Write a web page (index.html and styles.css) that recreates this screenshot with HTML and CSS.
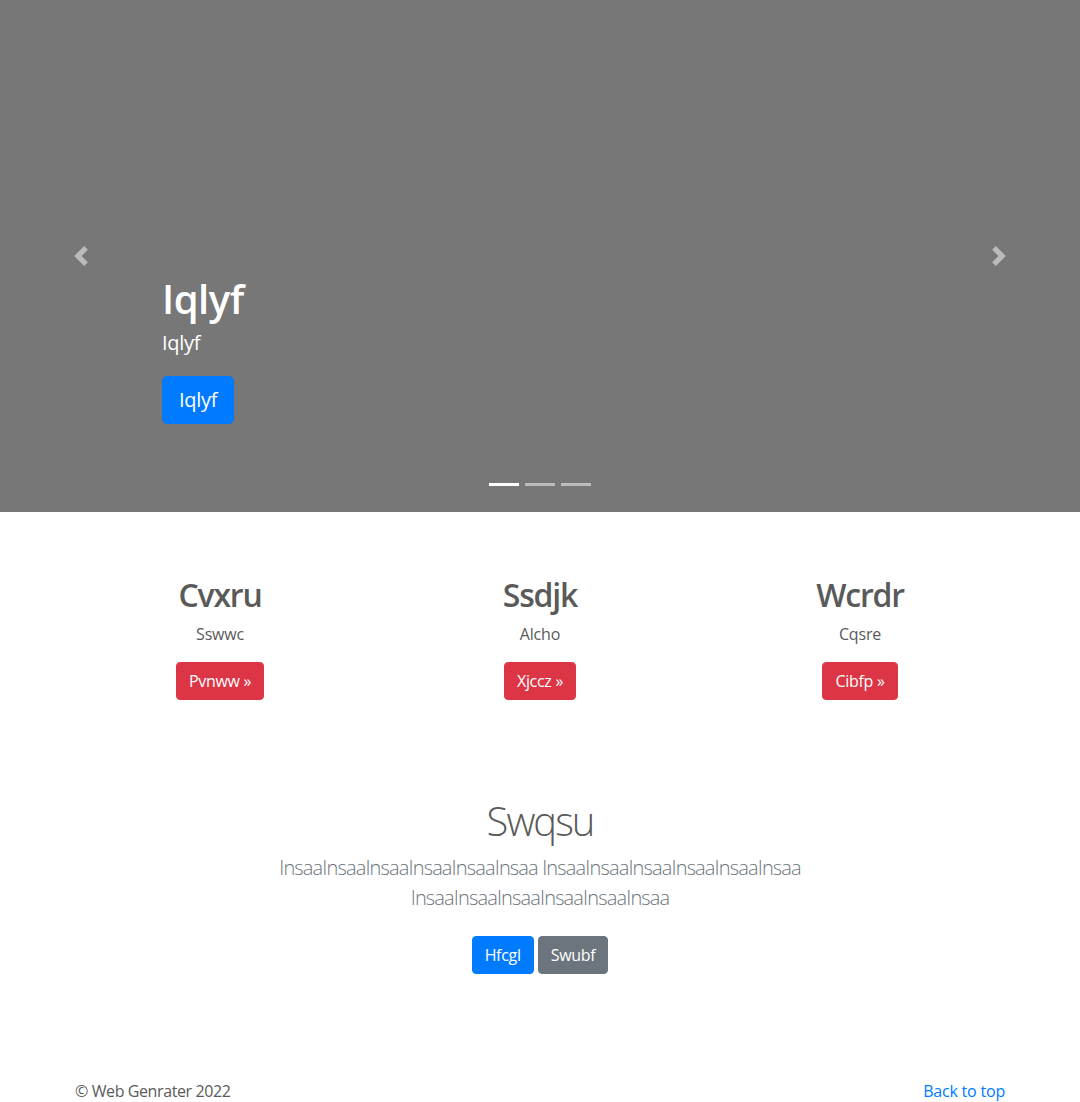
FILE: index.html
```html
<!DOCTYPE html>
<html lang="en">
<head>
<meta charset="utf-8">
<title>Carousel</title>
<link rel="stylesheet" href="styles.css">
</head>
<body>
<div class="carousel">
  <a class="ctrl ctrl-prev" href="#"><svg class="ctrl-icon" viewBox="0 0 8 8"><path d="M5.25 0l-4 4 4 4 1.5-1.5-2.5-2.5 2.5-2.5-1.5-1.5z"/></svg></a>
  <div class="caption">
    <h1 class="caption-title">Iqlyf</h1>
    <p class="caption-text">Iqlyf</p>
    <p class="caption-action"><a class="btn btn-lg btn-primary" href="#">Iqlyf</a></p>
  </div>
  <a class="ctrl ctrl-next" href="#"><svg class="ctrl-icon" viewBox="0 0 8 8"><path d="M2.75 0l-1.5 1.5 2.5 2.5-2.5 2.5 1.5 1.5 4-4-4-4z"/></svg></a>
  <ol class="indicators">
    <li class="active"></li>
    <li></li>
    <li></li>
  </ol>
</div>

<div class="container marketing">
  <div class="row">
    <div class="col">
      <h2 class="col-title">Cvxru</h2>
      <p class="col-text">Sswwc</p>
      <p class="col-action"><a class="btn btn-danger" href="#">Pvnww &raquo;</a></p>
    </div>
    <div class="col">
      <h2 class="col-title">Ssdjk</h2>
      <p class="col-text">Alcho</p>
      <p class="col-action"><a class="btn btn-danger" href="#">Xjccz &raquo;</a></p>
    </div>
    <div class="col">
      <h2 class="col-title">Wcrdr</h2>
      <p class="col-text">Cqsre</p>
      <p class="col-action"><a class="btn btn-danger" href="#">Cibfp &raquo;</a></p>
    </div>
  </div>
</div>

<section class="jumbo">
  <div class="jumbo-inner">
    <h1 class="jumbo-title">Swqsu</h1>
    <p class="lead">InsaaInsaaInsaaInsaaInsaaInsaa InsaaInsaaInsaaInsaaInsaaInsaa InsaaInsaaInsaaInsaaInsaaInsaa</p>
    <p class="jumbo-actions"><a class="btn btn-primary" href="#">Hfcgl</a><a class="btn btn-secondary" href="#">Swubf</a></p>
  </div>
</section>

<footer class="container footer">
  <p class="footer-copy">&copy; Web Genrater 2022</p>
  <p class="footer-top"><a href="#">Back to top</a></p>
</footer>
</body>
</html>
```

FILE: styles.css
```css
* { box-sizing: border-box; }
html, body { margin: 0; padding: 0; }
body {
  font-family: "Open Sans", "Noto Sans", "Liberation Sans", sans-serif;
  font-size: 16px;
  line-height: 1.5;
  color: #5a5a5a;
  background: #fff;
}
p { margin: 0; }
h1, h2 { margin: 0; line-height: 1.2; }
a { text-decoration: none; }

.carousel {
  position: relative;
  height: 512px;
  background: #777;
  margin-bottom: 64px;
}
.ctrl {
  position: absolute;
  top: 0;
  bottom: 0;
  width: 15%;
  display: flex;
  align-items: center;
  justify-content: center;
  opacity: .5;
}
.ctrl-prev { left: 0; }
.ctrl-next { right: 0; }
.ctrl-icon { width: 20px; height: 20px; fill: #fff; }

.caption {
  position: absolute;
  left: 15%;
  right: 15%;
  bottom: 52px;
  padding: 20px 0;
  color: #fff;
  text-align: left;
}
.caption-title {
  font-size: 40px;
  font-weight: 600;
  margin-bottom: 5px;
  letter-spacing: -0.5px;
}
.caption-text { font-size: 20px; margin-bottom: 18px; letter-spacing: -0.3px; }
.caption-action { margin-bottom: 16px; }

.indicators {
  position: absolute;
  left: 15%;
  right: 15%;
  bottom: 26px;
  margin: 0;
  padding: 0;
  list-style: none;
  display: flex;
  justify-content: center;
  gap: 6px;
}
.indicators li {
  width: 30px;
  height: 3px;
  background: rgba(255,255,255,.5);
}
.indicators li.active { background: #fff; }

.btn {
  display: inline-block;
  font-size: 16px;
  line-height: 24px;
  padding: 6px 12px;
  border: 1px solid transparent;
  border-radius: 4px;
  color: #fff;
  letter-spacing: -0.3px;
}
.btn-lg { font-size: 20px; line-height: 30px; padding: 8px 16px; border-radius: 5px; }
.btn-primary { background: #007bff; border-color: #007bff; }
.btn-danger { background: #dc3545; border-color: #dc3545; }
.btn-secondary { background: #6c757d; border-color: #6c757d; }

.container {
  width: 960px;
  margin: 0 auto;
  padding: 0 15px;
}
.row { display: flex; margin: 0 -15px; }
.col {
  flex: 1 1 0;
  padding: 0 15px;
  text-align: center;
  margin-bottom: 24px;
}
.col-title { font-size: 32px; font-weight: 600; margin-bottom: 8px; letter-spacing: -1.2px; }
.col-text { margin: 0 12px 16px; font-size: 16px; letter-spacing: -0.2px; }
.col-action { margin-bottom: 16px; }

.jumbo {
  padding: 57px 0 48px;
  text-align: center;
}
.jumbo-inner {
  max-width: 640px;
  margin: 0 auto;
  padding: 0 15px;
}
.jumbo-title { font-size: 40px; font-weight: 300; margin-bottom: 8px; letter-spacing: -2px; }
.lead { font-size: 20px; font-weight: 300; line-height: 30px; color: #6c757d; margin-bottom: 23px; letter-spacing: -0.85px; }
.jumbo-actions { display: flex; justify-content: center; gap: 4px; }

.footer {
  display: flex;
  justify-content: space-between;
  padding-top: 57px;
}
.footer-copy { color: #5a5a5a; letter-spacing: -0.4px; }
.footer-top a { color: #007bff; letter-spacing: -0.2px; }
```
